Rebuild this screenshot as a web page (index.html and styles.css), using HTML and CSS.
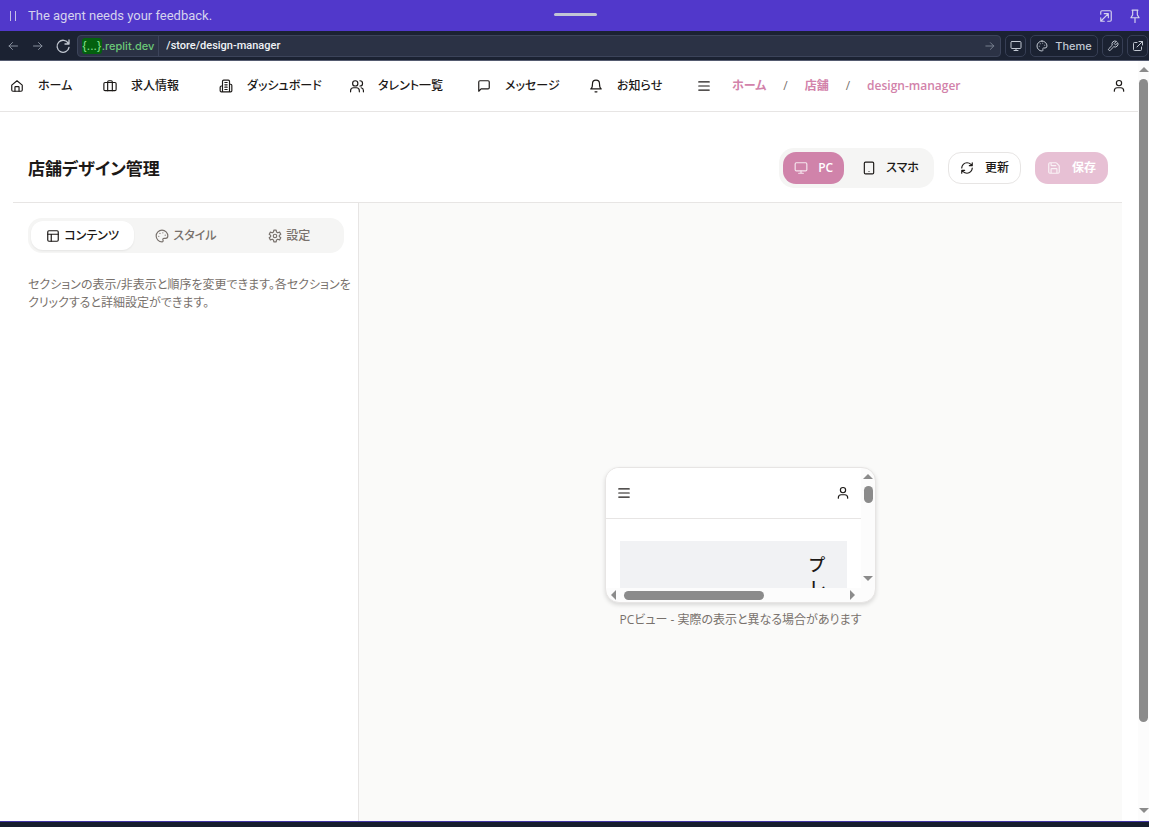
FILE: index.html
```html
<!DOCTYPE html>
<html lang="ja">
<head>
<meta charset="utf-8">
<meta name="viewport" content="width=device-width, initial-scale=1">
<title>店舗デザイン管理</title>
<link rel="stylesheet" href="styles.css">
</head>
<body>
<svg class="sprite" aria-hidden="true">
  <symbol id="user" viewBox="0 0 24 24"><circle cx="12" cy="7" r="4.500"/><path d="M20 21v-1a5 5 0 0 0-5-5H9a5 5 0 0 0-5 5v1"/></symbol>
  <symbol id="menu" viewBox="0 0 24 24"><path d="M3 5h18M3 12h18M3 19h18"/></symbol>
  <symbol id="palette" viewBox="0 0 24 24"><path d="M12 2a10 10 0 0 0 0 20c1.7 0 2.5-1.8 1.7-3-.9-1.500.2-3 1.800-3h2.500a4 4 0 0 0 4-4c0-5.500-4.500-10-10-10z"/><path d="M13.500 6.500h.01M17.500 10.500h.01M8.500 7.500h.01M6.500 12.500h.01"/></symbol>
  <symbol id="monitor" viewBox="0 0 24 24"><rect x="2" y="3" width="20" height="14" rx="2"/><path d="M8 21h8M12 17v4"/></symbol>
</svg>

<div class="notice">
  <span class="pause"></span>
  <span class="notice-text">The agent needs your feedback.</span>
  <span class="grip"></span>
  <button class="bare" aria-label="Expand"><svg class="ic14" viewBox="0 0 24 24"><path d="M3 9V5a2 2 0 0 1 2-2h14a2 2 0 0 1 2 2v14a2 2 0 0 1-2 2h-4M9 8h7v7M16 8 3 21M3 15v6h6"/></svg></button>
  <button class="bare" aria-label="Pin"><svg class="ic14" viewBox="0 0 24 24"><path d="M7 2h10M8 2v8l-3 5h14l-3-5V2M12 15v8"/></svg></button>
</div>

<div class="toolbar">
  <button class="bare dim" aria-label="Back"><svg class="ic12" viewBox="0 0 24 24"><path d="M21 12H4M11 5l-7 7 7 7"/></svg></button>
  <button class="bare dim" aria-label="Forward"><svg class="ic12" viewBox="0 0 24 24"><path d="M3 12h17M13 5l7 7-7 7"/></svg></button>
  <button class="bare" aria-label="Reload"><svg class="ic16" viewBox="0 0 24 24"><path d="M20 8a9 9 0 1 0 1 6M21 3v6h-6"/></svg></button>
  <div class="address">
    <span class="host"><mark>{...}</mark>.replit.dev</span>
    <input class="path" type="text" aria-label="Path" value="/store/design-manager">
    <button class="bare dim" aria-label="Go"><svg class="ic10" viewBox="0 0 24 24"><path d="M2 12h19M13 4l8 8-8 8"/></svg></button>
  </div>
  <button class="tool" aria-label="Device"><svg class="ic12"><use href="#monitor"/></svg></button>
  <button class="tool theme"><svg class="ic12"><use href="#palette"/></svg>Theme</button>
  <button class="tool" aria-label="Dev tools"><svg class="ic12" viewBox="0 0 24 24"><path d="M14.700 6.300a1 1 0 0 0 0 1.400l1.600 1.600a1 1 0 0 0 1.400 0l3.800-3.800a6 6 0 0 1-8 8l-6.900 6.900a2.100 2.100 0 0 1-3-3l6.900-6.900a6 6 0 0 1 8-8z"/></svg></button>
  <button class="tool" aria-label="Open in new tab"><svg class="ic12" viewBox="0 0 24 24"><path d="M14 3h7v7M21 3 10 14M19 14v5a2 2 0 0 1-2 2H5a2 2 0 0 1-2-2V7a2 2 0 0 1 2-2h5"/></svg></button>
</div>

<div class="frame">
  <div class="app">
    <header class="site">
      <nav class="links" aria-label="メイン">
        <a href="#"><svg class="ic14" viewBox="0 0 24 24"><path d="M3 10.500 12 3l9 7.500V19a2 2 0 0 1-2 2H5a2 2 0 0 1-2-2z"/><path d="M8.500 21v-7a1 1 0 0 1 1-1h5a1 1 0 0 1 1 1v7"/></svg>ホーム</a>
        <a href="#"><svg class="ic14" viewBox="0 0 24 24"><rect x="1.500" y="6" width="21" height="14" rx="2"/><path d="M8 20V5a2 2 0 0 1 2-2h4a2 2 0 0 1 2 2v15"/></svg>求人情報</a>
        <a href="#"><svg class="ic14" viewBox="0 0 24 24"><path d="M6 22V4a2 2 0 0 1 2-2h8a2 2 0 0 1 2 2v18zM6 12H4a2 2 0 0 0-2 2v6a2 2 0 0 0 2 2h2M18 9h2a2 2 0 0 1 2 2v9a2 2 0 0 1-2 2h-2M10 6h4M10 10h4M10 14h4M10 18h4"/></svg>ダッシュボード</a>
        <a href="#"><svg class="ic14" viewBox="0 0 24 24"><circle cx="9" cy="7.500" r="4.500"/><path d="M16 22v-2a5 5 0 0 0-5-5H6a5 5 0 0 0-5 5v2M17 3a4.500 4.500 0 0 1 0 9M23 22v-2a5 5 0 0 0-4-5"/></svg>タレント一覧</a>
        <a href="#"><svg class="ic14" viewBox="0 0 24 24"><path d="M21 15a2 2 0 0 1-2 2H7l-4 4V5a2 2 0 0 1 2-2h14a2 2 0 0 1 2 2z"/></svg>メッセージ</a>
        <a href="#"><svg class="ic14" viewBox="0 0 24 24"><path d="M6 8a6 6 0 0 1 12 0c0 7 3 9 3 9H3s3-2 3-9M10.300 22h3.400"/></svg>お知らせ</a>
      </nav>
      <button class="bare" aria-label="メニュー"><svg class="ic14"><use href="#menu"/></svg></button>
      <nav class="crumbs" aria-label="パンくず">
        <a href="#">ホーム</a><span>/</span><a href="#">店舗</a><span>/</span><a href="#">design-manager</a>
      </nav>
      <button class="bare account" aria-label="アカウント"><svg class="ic14"><use href="#user"/></svg></button>
    </header>

    <main class="page">
      <div class="titlebar">
        <h1>店舗デザイン管理</h1>
        <div class="devices">
          <button class="btn primary"><svg class="ic14"><use href="#monitor"/></svg>PC</button>
          <button class="btn"><svg class="ic14" viewBox="0 0 24 24"><rect x="4" y="2" width="16" height="20" rx="2"/><path d="M12 18h.01"/></svg>スマホ</button>
        </div>
        <button class="btn outline"><svg class="ic14" viewBox="0 0 24 24"><path d="M3 12a9 9 0 0 1 9-9 9.750 9.750 0 0 1 6.740 2.740L21 8M21 3v5h-5M21 12a9 9 0 0 1-9 9 9.750 9.750 0 0 1-6.740-2.740L3 16M8 16H3v5"/></svg>更新</button>
        <button class="btn primary" disabled><svg class="ic14" viewBox="0 0 24 24"><path d="M15.200 3a2 2 0 0 1 1.400.6l3.800 3.800a2 2 0 0 1 .6 1.400V19a2 2 0 0 1-2 2H5a2 2 0 0 1-2-2V5a2 2 0 0 1 2-2zM17 21v-7a1 1 0 0 0-1-1H8a1 1 0 0 0-1 1v7M7 3v4a1 1 0 0 0 1 1h7"/></svg>保存</button>
      </div>
      <div class="workspace">
        <section class="panel">
          <div class="tabs" role="tablist">
            <button role="tab" aria-selected="true"><svg class="ic14" viewBox="0 0 24 24"><rect x="3" y="3" width="18" height="18" rx="2"/><path d="M3 9h18M9 21V9"/></svg>コンテンツ</button>
            <button role="tab" aria-selected="false"><svg class="ic14"><use href="#palette"/></svg>スタイル</button>
            <button role="tab" aria-selected="false"><svg class="ic14" viewBox="0 0 24 24"><path d="M10 2h4l.6 3.200 2.200 1.300 3.100-1.100 2 3.500-2.500 2.100v2l2.500 2.100-2 3.500-3.100-1.100-2.200 1.300L14 22h-4l-.6-3.200-2.200-1.300-3.100 1.100-2-3.500L4.600 13v-2L2.100 8.900l2-3.500 3.100 1.100 2.200-1.300z"/><circle cx="12" cy="12" r="3"/></svg>設定</button>
          </div>
          <p>セクションの表示/非表示と順序を変更できます。各セクションをクリックすると詳細設定ができます。</p>
        </section>
        <section class="stage">
          <div class="preview">
            <div class="view">
              <div class="view-head">
                <button class="bare" aria-label="メニュー"><svg class="ic14"><use href="#menu"/></svg></button>
                <button class="bare" aria-label="アカウント"><svg class="ic14"><use href="#user"/></svg></button>
              </div>
              <div class="view-body"><div class="hero">プ<br>レ</div></div>
            </div>
            <div class="vbar"><i class="up"></i><i class="vthumb"></i><i class="down"></i></div>
            <div class="hbar"><i class="left"></i><span class="htrack"><i class="hthumb"></i></span><i class="right"></i></div>
          </div>
          <p class="caption">PCビュー - 実際の表示と異なる場合があります</p>
        </section>
      </div>
    </main>
  </div>
  <div class="scroll"><i class="up"></i><span class="track"><i class="thumb"></i></span><i class="down"></i></div>
</div>
<div class="base"></div>
</body>
</html>
```

FILE: styles.css
```css
* { box-sizing: border-box; }
body {
  margin: 0;
  height: 100vh;
  display: flex;
  flex-direction: column;
  overflow: hidden;
  background: #fff;
  color: #1c1917;
  font: 500 12px/18px "Open Sans", "Noto Sans CJK JP", sans-serif;
  font-feature-settings: "palt";
}
button, input { font: inherit; color: inherit; font-feature-settings: inherit; }
a { color: inherit; text-decoration: none; }
svg {
  flex: none;
  fill: none;
  stroke: currentColor;
  stroke-width: 2;
  stroke-linecap: round;
  stroke-linejoin: round;
}
.sprite { position: absolute; width: 0; height: 0; }
.ic10 { width: 10px; height: 10px; }
.ic12 { width: 12px; height: 12px; }
.ic14 { width: 14px; height: 14px; }
.ic16 { width: 16px; height: 16px; }
.bare { display: flex; padding: 0; border: 0; background: none; }

.notice {
  flex: none;
  position: relative;
  display: flex;
  align-items: center;
  height: 31px;
  padding: 0 7px 0 10px;
  gap: 15px;
  background: #5138cb;
  color: #d5d2ee;
  font: 400 13px/18px Roboto, sans-serif;
}
.pause { width: 6px; height: 10px; border: solid #c5c0e8; border-width: 0 1px; }
.notice-text { flex: 1; margin-left: -3px; }
.grip {
  position: absolute;
  left: 50%;
  top: 13px;
  width: 43px;
  height: 3px;
  margin-left: -21px;
  border-radius: 2px;
  background: #c2c5d5;
}

.toolbar {
  flex: none;
  display: flex;
  align-items: center;
  height: 30px;
  padding: 0 1px 0 2px;
  gap: 4px;
  border-bottom: 1px solid #555b70;
  background: #1b2232;
  color: #c2c8d2;
  font: 500 11px/16px Inter, sans-serif;
}
.toolbar > .bare { width: 21px; justify-content: center; }
.dim { color: #868e9c; }
.address {
  flex: 1;
  display: flex;
  align-items: center;
  height: 22px;
  padding-right: 5px;
  border: 1px solid #3c445a;
  border-radius: 4px;
  background: #2b3245;
}
.host { padding: 0 4px; height: 20px; line-height: 20px; border-right: 1px solid #3c445a; color: #6cc978; }
.host mark { padding: 1px 0; border-radius: 3px; background: #04600f; color: #7edb87; }
.path { flex: 1; min-width: 0; padding: 0 7px; border: 0; background: none; color: #f0f2f6; font-family: Roboto, sans-serif; }
.tool {
  display: flex;
  align-items: center;
  justify-content: center;
  width: 21px;
  height: 22px;
  padding: 0;
  border: 1px solid #363e54;
  border-radius: 5px;
  background: none;
}
.theme { width: 68px; gap: 7px; }

.frame { flex: 1; min-height: 0; display: flex; }
.app { flex: 1; min-width: 0; display: flex; flex-direction: column; }
.site {
  flex: none;
  display: flex;
  align-items: center;
  height: 51px;
  padding: 0 12px 0 10px;
  border-bottom: 1px solid #e7e5e4;
}
.links { display: grid; grid-template-columns: 93px 116px 131px 127px 112px 108px; }
.links a { display: flex; align-items: center; gap: 14px; white-space: nowrap; }
.crumbs { display: flex; gap: 17px; margin-left: 21px; color: #d282aa; font-weight: 600; }
.crumbs span { color: #78716c; font-weight: 400; }
.account { margin-left: auto; }

.page { flex: 1; min-height: 0; display: flex; flex-direction: column; padding: 22px 16px 0 13px; }
.titlebar {
  display: flex;
  align-items: center;
  gap: 14px;
  padding: 14px 14px 14px 15px;
  border-bottom: 1px solid #e7e5e4;
}
h1 { flex: 1; margin: 0; font-size: 17px; line-height: 25px; font-weight: 600; }
.devices { display: flex; padding: 4px; border-radius: 15px; background: #f5f5f4; }
.btn {
  display: flex;
  align-items: center;
  gap: 11px;
  height: 32px;
  padding: 0 11px;
  border: 1px solid transparent;
  border-radius: 13px;
  background: none;
}
.devices .btn { gap: 10px; padding: 0 10px; }
.devices .btn + .btn { padding-left: 17px; }
.primary { background: #d083aa; color: #fff; font-weight: 600; }
.primary svg { opacity: .8; }
.primary:disabled { opacity: .5; }
.outline { border-color: #e7e5e4; background: #fff; }

.workspace { flex: 1; min-height: 0; display: flex; }
.panel { flex: none; width: 346px; padding: 15px 14px 0 15px; border-right: 1px solid #e7e5e4; }
.tabs { display: grid; grid-template-columns: repeat(3, 1fr); padding: 3px; border-radius: 14px; background: #f5f5f4; }
.tabs button {
  display: flex;
  align-items: center;
  justify-content: center;
  gap: 4px;
  height: 29px;
  padding: 0;
  border: 0;
  border-radius: 12px;
  background: none;
  color: #78716c;
}
.tabs [aria-selected="true"] { background: #fff; color: #1c1917; box-shadow: 0 1px 2px #0001; }
.panel p { margin: 23px -12px 0 0; color: #78716c; font-weight: 400; }
.stage {
  flex: 1;
  min-width: 0;
  display: flex;
  flex-direction: column;
  align-items: center;
  justify-content: center;
  padding-top: 72px;
  background: #fafaf9;
}
.preview {
  display: grid;
  grid-template: 120px 14px / 255px 14px;
  overflow: hidden;
  border: 1px solid #e7e5e4;
  border-radius: 14px;
  background: #fcfcfc;
  box-shadow: 0 2px 4px #0002;
}
.view { overflow: hidden; background: #fff; }
.view-head {
  display: flex;
  align-items: center;
  justify-content: space-between;
  height: 51px;
  padding: 0 11px;
  border-bottom: 1px solid #e7e5e4;
}
.view-body { padding: 22px 14px 0; }
.hero { height: 60px; padding: 12px 22px; background: #f1f2f4; text-align: right; font-size: 17px; line-height: 23px; font-weight: 500; }
.caption { margin: 8px 0 0; color: #78716c; font-weight: 400; }

.up, .down, .left, .right { flex: none; width: 0; height: 0; border: 5px solid transparent; }
.up { border-top: 0; border-bottom-color: #8b8b8b; }
.down { border-bottom: 0; border-top-color: #8b8b8b; }
.left { border-left: 0; border-right-color: #8b8b8b; }
.right { border-right: 0; border-left-color: #8b8b8b; }
.vbar { display: flex; flex-direction: column; align-items: center; padding: 6px 0 7px; }
.vthumb { width: 9px; height: 17px; margin: 7px 0 auto; border-radius: 5px; background: #8b8b8b; }
.hbar { display: flex; align-items: center; gap: 8px; padding: 0 6px 0 5px; }
.htrack { flex: 1; }
.hthumb { display: block; width: 64%; height: 9px; border-radius: 5px; background: #8b8b8b; }
.scroll {
  flex: none;
  width: 11px;
  display: flex;
  flex-direction: column;
  align-items: center;
  gap: 7px;
  padding: 6px 0 8px;
  background: #fcfcfc;
}
.track { flex: 1; }
.thumb { display: block; width: 9px; height: 89%; border-radius: 5px; background: #8b8b8b; }
.base { flex: none; height: 6px; border-top: 1px solid #4135a5; background: #171e2e; }
```
